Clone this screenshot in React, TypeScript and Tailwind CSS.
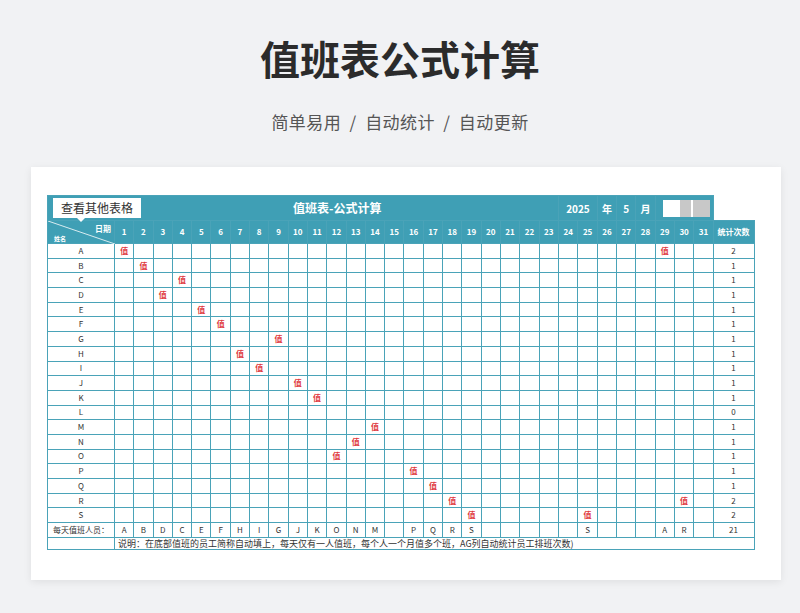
import React from "react";

const names = "ABCDEFGHIJKLMNOPQRS".split("");
const duty: Record<string, number[]> = {
  A: [1, 29], B: [2], C: [4], D: [3], E: [5], F: [6], G: [9], H: [7], I: [8], J: [10], K: [11], L: [],
  M: [14], N: [13], O: [12], P: [16], Q: [17], R: [18, 30], S: [19, 25],
};
const days = Array.from({ length: 31 }, (_, i) => i + 1);
const byDay: Record<number, string> = {};
names.forEach((n) => duty[n].forEach((d) => (byDay[d] = n)));

const cell = "border border-[#4aa3b8] p-0 text-center";

export default function App() {
  return (
    <div className="w-[800px] h-[613px] bg-[#f1f2f4] flex flex-col items-center overflow-hidden" style={{ fontFamily: '"Noto Sans CJK SC","Noto Sans",sans-serif' }}>
      <div className="mt-[30px] text-[40px] leading-[56px] font-bold text-[#2b2b2b]">值班表公式计算</div>
      <div className="mt-[24px] text-[17px] leading-[24px] text-[#555] tracking-wide">简单易用 &nbsp;/&nbsp; 自动统计 &nbsp;/&nbsp; 自动更新</div>
      <div className="mt-[33px] self-start ml-[31px] w-[750px] h-[413px] bg-white shadow-[0_2px_8px_rgba(0,0,0,0.08)] pt-[28px] pl-[16px]">
        <table className="border-collapse table-fixed w-[707px] text-[8px] text-[#333]">
          <colgroup>
            <col className="w-[67px]" />
            {days.map((d) => <col key={d} className="w-[19.3px]" />)}
            <col className="w-[41px]" />
          </colgroup>
          <tbody>
            <tr className="h-[25px] bg-[#3f9fb5] text-white font-bold">
              <td colSpan={24} className="border border-[#4aa3b8] p-0 pl-[5px]">
                <div className="flex items-center">
                  <div className="relative w-[88px] h-[20px] bg-white text-[#333] text-[12px] font-normal leading-[20px] text-center shrink-0">
                    查看其他表格
                    <div className="absolute left-[24px] bottom-[-4px] w-0 h-0 border-l-[4px] border-r-[4px] border-t-[4px] border-l-transparent border-r-transparent border-t-white" />
                  </div>
                  <div className="ml-[152px] text-[12px]">值班表-公式计算</div>
                </div>
              </td>
              <td colSpan={2} className={cell + " text-[10px]"}>2025</td>
              <td className={cell + " text-[10px]"}>年</td>
              <td className={cell + " text-[10px]"}>5</td>
              <td className={cell + " text-[10px]"}>月</td>
              <td colSpan={3} className="border border-[#4aa3b8] p-[3px] pl-[7px]">
                <div className="h-[17px] bg-white flex">
                  <div className="w-[18px]" />
                  <div className="w-[12px] bg-[#c8c8c8]" />
                  <div className="w-[2px]" />
                  <div className="w-[18px] bg-[#c8c8c8]" />
                </div>
              </td>
            </tr>
            <tr className="h-[23px] bg-[#3f9fb5] text-white font-bold">
              <td className="border border-[#4aa3b8] p-0 relative">
                <svg className="absolute inset-0" width="67" height="23"><line x1="0" y1="0" x2="67" y2="23" stroke="white" strokeWidth="0.8" /></svg>
                <span className="absolute right-[3px] top-[2px] text-[8px]">日期</span>
                <span className="absolute left-[6px] bottom-[0px] text-[6px]">姓名</span>
              </td>
              {days.map((d) => <td key={d} className={cell}>{d}</td>)}
              <td className={cell}>统计次数</td>
            </tr>
            {names.map((n) => (
              <tr key={n} className="h-[14.7px]">
                <td className={cell + " leading-none"}>{n}</td>
                {days.map((d) => (
                  <td key={d} className={cell + " leading-none text-[#e0393e] font-bold"}>{duty[n].includes(d) ? "值" : ""}</td>
                ))}
                <td className={cell + " leading-none"}>{duty[n].length}</td>
              </tr>
            ))}
            <tr className="h-[15px]">
              <td className={cell + " leading-none"}>每天值班人员：</td>
              {days.map((d) => <td key={d} className={cell + " leading-none"}>{byDay[d] || ""}</td>)}
              <td className={cell + " leading-none"}>21</td>
            </tr>
            <tr className="h-[12px]">
              <td className={cell} />
              <td colSpan={32} className="border border-[#4aa3b8] p-0 pl-[3px] text-left leading-none text-[9px]">说明：在底部值班的员工简称自动填上，每天仅有一人值班，每个人一个月值多个班，AG列自动统计员工排班次数)</td>
            </tr>
          </tbody>
        </table>
      </div>
    </div>
  );
}
